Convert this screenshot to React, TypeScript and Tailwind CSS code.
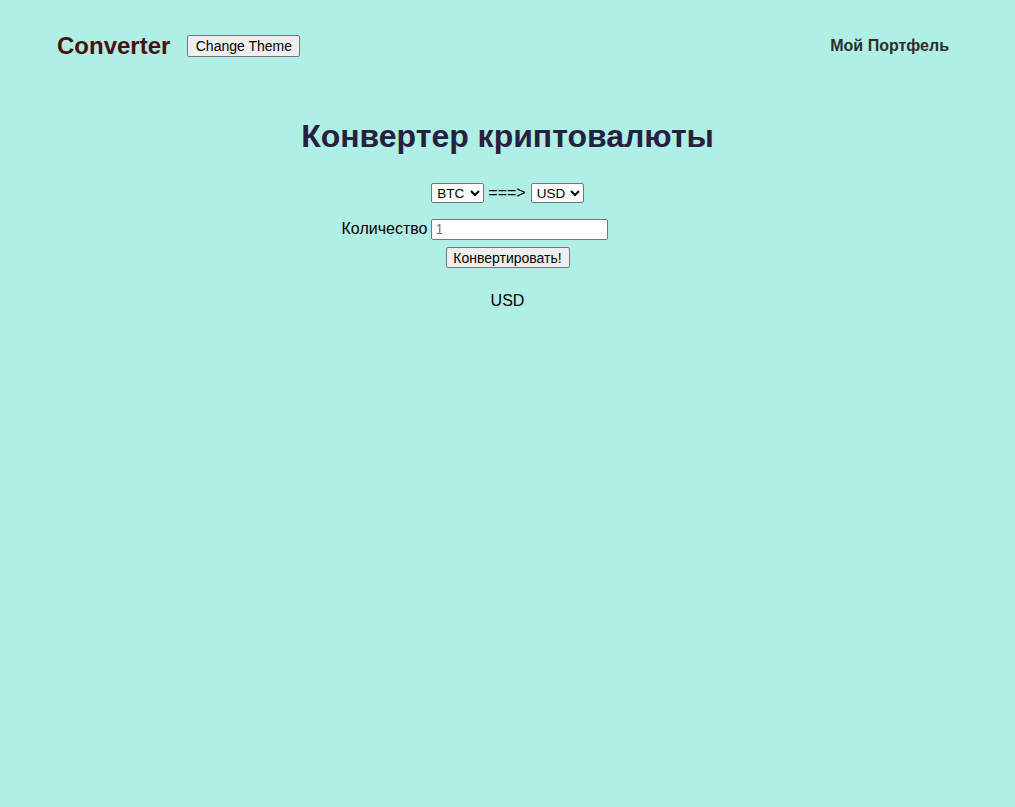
import { useState } from "react";

export default function App() {
  const [from, setFrom] = useState("BTC");
  const [to, setTo] = useState("USD");
  const [amount, setAmount] = useState("");

  return (
    <div className="min-h-[807px] bg-[#afefe6] font-['Liberation_Sans',Arial,sans-serif] text-black">
      <header className="flex items-center justify-between pl-[57px] pr-[66px] pt-[32px]">
        <div className="flex items-center gap-[17px]">
          <h1 className="text-[24px] font-bold text-[#4b0f0f] leading-[28px]">Converter</h1>
          <button className="h-[22px] w-[113px] border border-[#767676] bg-[#efefef] rounded-[2px] text-[14px] leading-none text-black">
            Change Theme
          </button>
        </div>
        <a className="text-[16px] font-bold text-[#2d2d2d] cursor-pointer">Мой Портфель</a>
      </header>

      <main className="flex flex-col items-center pt-[58px]">
        <h2 className="text-[32px] font-bold text-[#27213f] leading-[37px]">Конвертер криптовалюты</h2>

        <div className="mt-[26px] flex items-center text-[16px]">
          <select
            value={from}
            onChange={(e) => setFrom(e.target.value)}
            className="h-[20px] w-[53px] border border-[#767676] bg-white rounded-[2px] text-[13.5px] pl-[1px]"
          >
            <option>BTC</option>
            <option>ETH</option>
          </select>
          <span className="ml-[4px] mr-[5px]">===&gt;</span>
          <select
            value={to}
            onChange={(e) => setTo(e.target.value)}
            className="h-[20px] w-[53px] border border-[#767676] bg-white rounded-[2px] text-[13.5px] pl-[1px]"
          >
            <option>USD</option>
            <option>EUR</option>
          </select>
        </div>

        <div className="mt-[12px] flex items-center gap-[4px] pr-[65px]">
          <span className="text-[16px]">Количество</span>
          <input
            value={amount}
            onChange={(e) => setAmount(e.target.value)}
            placeholder="1"
            className="h-[21px] w-[177px] border border-[#767676] bg-white rounded-[2px] px-[3px] text-[14px] placeholder:text-[#757575]"
          />
        </div>

        <button className="mt-[6px] h-[21px] w-[124px] border border-[#767676] bg-[#efefef] rounded-[2px] text-[14px] leading-none">
          Конвертировать!
        </button>

        <p className="mt-[21px] text-[16px]">{to}</p>
      </main>
    </div>
  );
}
